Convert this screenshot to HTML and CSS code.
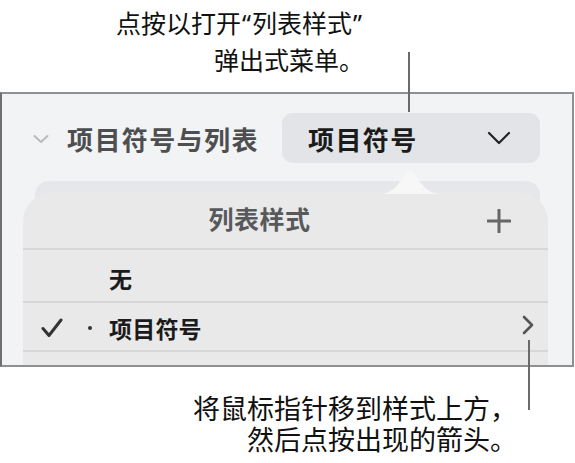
FILE: index.html
```html
<!DOCTYPE html>
<html lang="zh-CN">
<head>
<meta charset="utf-8">
<link rel="stylesheet" href="styles.css">
</head>
<body>
<div class="page">
  <div class="callout callout-top">
    <p class="line-a">点按以打开<span class="q">“</span>列表样式<span class="q">”</span></p>
    <p class="line-b">弹出式菜单。</p>
  </div>
  <section class="panel">
    <div class="section-head">
      <svg class="disclosure" width="16" height="10" viewBox="0 0 16 10"><path d="M1.5 2 L8 8 L14.5 2" fill="none" stroke="#b9babd" stroke-width="2" stroke-linecap="round" stroke-linejoin="round"/></svg>
      <span class="section-title">项目符号与列表</span>
      <div class="popup">
        <span class="popup-label">项目符号</span>
        <svg class="popup-chevron" width="24" height="14" viewBox="0 0 24 14"><path d="M2 2 L12 12 L22 2" fill="none" stroke="#222" stroke-width="2.2" stroke-linecap="round" stroke-linejoin="round"/></svg>
      </div>
    </div>
    <div class="under-card"></div>
    <div class="popover">
      <svg class="popover-arrow" width="62" height="26" viewBox="0 0 62 26"><path d="M0 26 C12 26 17 19 23 11 C27 5 29 3 31 3 C33 3 35 5 39 11 C45 19 50 26 62 26 Z" fill="#f7f7f8"/></svg>
      <div class="pop-head">
        <span class="pop-title">列表样式</span>
        <svg class="plus" width="24" height="24" viewBox="0 0 24 24"><path d="M12 1 V23 M1 12 H23" stroke="#666" stroke-width="3" stroke-linecap="round"/></svg>
      </div>
      <div class="row row-none">
        <span class="check-col"></span>
        <span class="bullet-col"></span>
        <span class="row-label">无</span>
      </div>
      <div class="row row-bullet">
        <span class="check-col">
          <svg width="22" height="20" viewBox="0 0 22 20"><path d="M2 10.5 L8 17.5 L20 2" fill="none" stroke="#333" stroke-width="3" stroke-linecap="round" stroke-linejoin="round"/></svg>
        </span>
        <span class="bullet-col"><span class="dot"></span></span>
        <span class="row-label">项目符号</span>
        <svg class="row-arrow" width="12" height="20" viewBox="0 0 12 20"><path d="M2 2 L10 10 L2 18" fill="none" stroke="#555" stroke-width="2.6" stroke-linecap="round" stroke-linejoin="round"/></svg>
      </div>
      <div class="row row-empty"></div>
    </div>
  </section>
  <div class="callout callout-bottom">
    <p>将鼠标指针移到样式上方，</p>
    <p>然后点按出现的箭头。</p>
  </div>
  <span class="leader leader-top"></span>
  <span class="leader leader-bottom"></span>
</div>
</body>
</html>
```

FILE: styles.css
```css
* { box-sizing: border-box; }
html, body { margin: 0; padding: 0; background: #ffffff; }
body {
  font-family: "Noto Sans CJK SC", "Noto Sans", sans-serif;
  color: #111;
}
.page {
  position: relative;
  width: 575px;
  height: 463px;
  overflow: hidden;
}
.callout p { margin: 0; }
.callout {
  text-align: right;
  color: #111;
}
.callout-top {
  padding-top: 4px;
  font-size: 25px;
  line-height: 36px;
  height: 92px;
}
.callout-top .line-a { padding-right: 212px; }
.callout-top .line-b { padding-right: 211px; }
.q {
  font-family: "Noto Sans", "Liberation Sans", sans-serif;
  padding: 0 1px;
}
.callout-bottom {
  padding: 25px 58px 0 0;
  font-size: 27px;
  line-height: 31px;
}
.panel {
  height: 275px;
  width: 574px;
  border: 2px solid #8f9092;
  border-left-color: #6e6f71;
  background: #f2f3f5;
  overflow: hidden;
}
.section-head {
  display: flex;
  align-items: center;
  height: 70px;
  padding: 18px 0 0 31px;
}
.disclosure { flex: none; margin-top: 2px; }
.section-title {
  margin-left: 18px;
  font-size: 26px;
  font-weight: 700;
  letter-spacing: 1.4px;
  color: #4d4e50;
  width: 215px;
}
.popup {
  display: flex;
  align-items: center;
  width: 258px;
  height: 50px;
  border-radius: 11px;
  background: #e3e4e7;
  padding: 0 29px 0 26px;
}
.popup-label {
  flex: 1;
  font-size: 26px;
  font-weight: 700;
  letter-spacing: 1.4px;
  color: #1b1b1c;
}
.under-card {
  margin: 17px 32px 0 33px;
  height: 60px;
  border-radius: 14px;
  background: #e6e7ea;
}
.popover {
  position: relative;
  margin: -49px 24px 0 21px;
  border-radius: 30px 30px 0 0;
  background: #e9e9e9;
  height: 200px;
}
.popover-arrow {
  position: absolute;
  left: 356px;
  top: -24px;
}
.pop-head {
  display: flex;
  align-items: center;
  justify-content: center;
  position: relative;
  height: 58px;
  padding-right: 52px;
  padding-bottom: 5px;
  border-bottom: 2px solid #d7d7d8;
}
.pop-title {
  font-size: 25px;
  font-weight: 700;
  color: #58595b;
  letter-spacing: 0.5px;
}
.plus {
  position: absolute;
  right: 37px;
  top: 17px;
}
.row {
  display: flex;
  align-items: center;
  border-bottom: 2px solid #d7d7d8;
  padding-left: 18px;
}
.row-none { height: 53px; padding-top: 4px; }
.row-bullet { height: 49px; padding-top: 2px; }
.row-empty { height: 40px; border-bottom: none; }
.check-col {
  width: 47px;
  display: flex;
  align-items: center;
}
.bullet-col {
  width: 21px;
  display: flex;
  align-items: center;
}
.dot {
  width: 4px;
  height: 4px;
  border-radius: 50%;
  background: #333;
}
.row-label {
  flex: 1;
  font-size: 23px;
  font-weight: 700;
  color: #1b1b1c;
  letter-spacing: 0.2px;
}
.row-arrow { margin-right: 14px; margin-top: -6px; }
.leader {
  position: absolute;
  width: 2px;
  background: #6a6a6a;
}
.leader-top { left: 408px; top: 52px; height: 60px; }
.leader-bottom { left: 528px; top: 340px; height: 70px; }
```
